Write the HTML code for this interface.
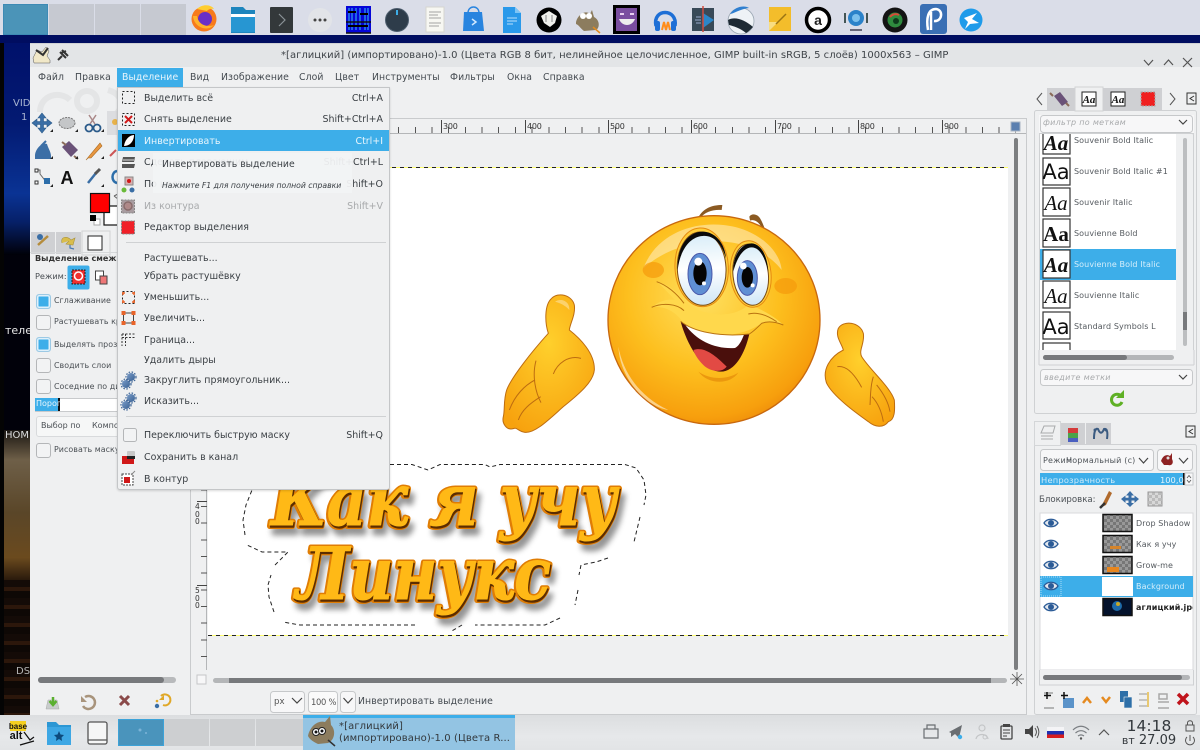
<!DOCTYPE html>
<html lang="ru"><head><meta charset="utf-8"><title>GIMP</title>
<style>
html,body{margin:0;padding:0;background:#000}
body{width:1200px;height:750px;overflow:hidden;position:relative;font-family:"DejaVu Sans","Liberation Sans","Noto Sans CJK SC",sans-serif;font-size:9.5px;color:#3c4146;filter:blur(.3px)}
div{position:absolute;box-sizing:border-box}
.t{white-space:nowrap;line-height:12px;height:12px}
.m{font-size:9.45px;color:#3a3f44;left:144px}
.s{font-size:9.45px;color:#3a3f44;right:817px;text-align:right}
.sv{position:absolute;left:0;top:0}
.cb{left:36px;width:15px;height:15px;border:1px solid #b4b6b8;border-radius:3px;background:#f2f3f4}
.on{background:#3daee9;box-shadow:inset 0 0 0 1.5px #dff0fa;border-color:#9cc9e4}
.lb{left:54px;font-size:7.9px;color:#4a4f54;letter-spacing:.05px}
.mb{top:72px;font-size:9.3px;color:#444a50;letter-spacing:.1px}
.fn{left:1074px;font-size:8px;color:#555a5f;letter-spacing:.1px}
.ln{left:1136px;font-size:8px;color:#555a5f;letter-spacing:.1px}
.btn{background:#f7f7f8;border:1px solid #c6c8ca;border-radius:3px}
.rl{top:121px;font-size:8px;color:#333;letter-spacing:-.2px}
</style></head><body>

<!-- wallpaper -->
<div style="left:0;top:35px;width:4px;height:680px;background:#040404"></div>
<div style="left:4px;top:35px;width:26px;height:220px;background:linear-gradient(#00106a 0%,#031a72 40%,#0a3394 72%,#062068 85%,#000008 100%)"></div>
<div style="left:4px;top:255px;width:26px;height:175px;background:#01010a"></div>
<div style="left:4px;top:430px;width:26px;height:150px;background:linear-gradient(#1a1612 0%,#6e5f48 20%,#5a4628 55%,#6b4a1e 85%,#2a1a0c 100%)"></div>
<div style="left:4px;top:580px;width:26px;height:135px;background:repeating-linear-gradient(#140b07 0 7px,#2c170b 7px 11px,#0e0805 11px 18px)"></div>
<div class="t" style="left:13px;top:98px;font-size:10px;color:#a8b4d0">VID</div>
<div class="t" style="left:21px;top:112px;font-size:10px;color:#a8b4d0">1</div>
<div class="t" style="left:5px;top:325px;font-size:11px;color:#e8e8e8">теле</div>
<div class="t" style="left:5px;top:430px;font-size:10px;color:#ddd">НОМ</div>
<div class="t" style="left:16px;top:666px;font-size:10px;color:#b4b4b4">DS</div>

<!-- top panel -->
<div style="left:0;top:0;width:1200px;height:35px;background:#dadde8"></div>
<div style="left:0;top:35px;width:1200px;height:8px;background:#000d60"></div>
<div style="left:3px;top:4px;width:45px;height:31px;background:#4b94b8;border:1px solid #3d8ab5"></div>
<div style="left:49px;top:4px;width:45px;height:31px;background:#c6c9d1"></div>
<div style="left:95px;top:4px;width:45px;height:31px;background:#c6c9d1"></div>
<div style="left:141px;top:4px;width:45px;height:31px;background:#c6c9d1"></div>

<!-- gimp window -->
<div style="left:30px;top:43px;width:1170px;height:672px;background:#eff0f1"></div>
<div style="left:30px;top:43px;width:1170px;height:24px;background:#e3e5e7;border-top:1px solid #cfd1d4"></div>
<div class="t" style="left:281px;top:50px;font-size:10px;color:#3f4449;letter-spacing:.02px">*[аглицкий] (импортировано)-1.0 (Цвета RGB 8 бит, нелинейное целочисленное, GIMP built-in sRGB, 5 слоёв) 1000x563 – GIMP</div>

<!-- menu bar -->
<div style="left:117px;top:68px;width:66px;height:19px;background:#3daee9"></div>
<div class="t mb" style="left:38px">Файл</div>
<div class="t mb" style="left:75px">Правка</div>
<div class="t mb" style="left:122px;color:#e8f5fc">Выделение</div>
<div class="t mb" style="left:190px">Вид</div>
<div class="t mb" style="left:221px">Изображение</div>
<div class="t mb" style="left:299px">Слой</div>
<div class="t mb" style="left:335px">Цвет</div>
<div class="t mb" style="left:372px">Инструменты</div>
<div class="t mb" style="left:450px">Фильтры</div>
<div class="t mb" style="left:507px">Окна</div>
<div class="t mb" style="left:543px">Справка</div>

<!-- canvas frame -->
<div style="left:190px;top:118px;width:837px;height:597px;background:#eff0f1;border:1px solid #c9cbcd"></div>
<div style="left:191px;top:119px;width:835px;height:15px;background:#eff0f1;border-bottom:1px solid #b4b6b8"></div>
<div style="left:191px;top:127px;width:825px;height:6px;background:repeating-linear-gradient(90deg,#555 0 1px,transparent 1px 16.68px);background-position:7px 0"></div>
<div style="left:441px;top:120px;width:1px;height:13px;background:#444"></div>
<div style="left:525px;top:120px;width:1px;height:13px;background:#444"></div>
<div style="left:608px;top:120px;width:1px;height:13px;background:#444"></div>
<div style="left:691px;top:120px;width:1px;height:13px;background:#444"></div>
<div style="left:775px;top:120px;width:1px;height:13px;background:#444"></div>
<div style="left:858px;top:120px;width:1px;height:13px;background:#444"></div>
<div style="left:942px;top:120px;width:1px;height:13px;background:#444"></div>
<div class="t rl" style="left:443px">300</div>
<div class="t rl" style="left:527px">400</div>
<div class="t rl" style="left:610px">500</div>
<div class="t rl" style="left:693px">600</div>
<div class="t rl" style="left:777px">700</div>
<div class="t rl" style="left:860px">800</div>
<div class="t rl" style="left:944px">900</div>
<!-- left ruler -->
<div style="left:191px;top:134px;width:16px;height:536px;background:#eff0f1;border-right:1px solid #b4b6b8"></div>
<div style="left:201px;top:134px;width:6px;height:536px;background:repeating-linear-gradient(180deg,#555 0 1px,transparent 1px 16.68px);background-position:0 5px"></div>
<div style="left:197px;top:501px;width:10px;height:1px;background:#444"></div>
<div style="left:197px;top:585px;width:10px;height:1px;background:#444"></div>
<div class="t" style="left:195px;top:503px;font-size:7.5px;line-height:7.5px;height:auto;white-space:normal;width:6px;color:#333">4<br>0<br>0</div>
<div class="t" style="left:195px;top:587px;font-size:7.5px;line-height:7.5px;height:auto;white-space:normal;width:6px;color:#333">5<br>0<br>0</div>
<!-- canvas -->
<div style="left:208px;top:167px;width:800px;height:468px;background:#fff"></div>

<svg class="sv" width="1200" height="750" viewBox="0 0 1200 750" xmlns="http://www.w3.org/2000/svg">
<defs>
<radialGradient id="fc" cx="45%" cy="38%" r="65%"><stop offset="0" stop-color="#ffe060"/><stop offset=".55" stop-color="#fdbf1e"/><stop offset=".9" stop-color="#f79f0d"/><stop offset="1" stop-color="#ee8d0a"/></radialGradient>
<radialGradient id="hd" cx="50%" cy="35%" r="70%"><stop offset="0" stop-color="#ffd02c"/><stop offset="1" stop-color="#f7a20e"/></radialGradient>
<linearGradient id="eyeg" x1="0" y1="0" x2="0" y2="1"><stop offset="0" stop-color="#d6ecf8"/><stop offset=".5" stop-color="#fff"/><stop offset="1" stop-color="#cfe6f6"/></linearGradient>
<filter id="bl" x="-10%" y="-20%" width="120%" height="140%"><feGaussianBlur stdDeviation="3"/></filter>
<pattern id="chk" width="6" height="6" patternUnits="userSpaceOnUse"><rect width="6" height="6" fill="#777"/><rect width="3" height="3" fill="#999"/><rect x="3" y="3" width="3" height="3" fill="#999"/></pattern>
<pattern id="chkl" width="6" height="6" patternUnits="userSpaceOnUse"><rect width="6" height="6" fill="#d8d8d8"/><rect width="3" height="3" fill="#bbb"/><rect x="3" y="3" width="3" height="3" fill="#bbb"/></pattern>
</defs>

<!-- selection edges on canvas -->
<g fill="none">
<path d="M208 167.500H1008M208 635.500H1008" stroke="#ffff70" stroke-width="1"/>
<path d="M208 167.500H1008M208 635.500H1008" stroke="#222" stroke-width="1" stroke-dasharray="4 4"/>
<path d="M390 464.500H412L428 470L440 464.500H485L490 467L500 464.500H625L636 468L644 480L646 495L644 505M640 517L634 542M608 558L596 562L581 565L579 575M578 590L575 605M560 618L545 625H475M462 625L450 632M415 625H300L283 622M274 612L269 597L268 585L271 575M275 565L285 555L288 552H262L247 545M245 535L243 520L246 505L252 490" stroke="#222" stroke-width="1" stroke-dasharray="4 3"/>
</g>

<!-- emoji -->
<g transform="translate(480 190) scale(.33333)">
 <path d="M655 82C670 55 695 45 727 45L725 60C700 58 675 65 660 85Z" fill="#8b5a22"/>
 <path d="M808 80C815 68 835 72 842 88C848 98 852 112 858 124L848 118C840 100 825 85 810 92Z" fill="#8b5a22"/>
 <ellipse cx="702" cy="390" rx="318" ry="313" fill="url(#fc)" stroke="#c8680e" stroke-width="4"/>
 <path d="M490 235C530 130 640 95 730 105C830 115 900 180 905 240C850 170 760 150 690 155C610 160 540 190 490 235Z" fill="#fff" opacity=".4"/>
 <path d="M415 470C430 550 480 620 565 660C500 650 420 570 415 470Z" fill="#fff" opacity=".5"/>
 <ellipse cx="520" cy="240" rx="32" ry="24" fill="#f59a0c" opacity=".7"/>
 <ellipse cx="917" cy="288" rx="34" ry="24" fill="#f59a0c" opacity=".7"/>
 <!-- lip area -->
 <path d="M530 275C570 285 600 310 625 345C680 380 760 385 805 345C830 350 880 375 910 405C885 395 860 392 845 400C800 430 750 436 715 436C670 434 630 420 605 392C590 370 555 345 515 352C535 335 560 325 585 330C565 310 548 290 530 275Z" fill="#ffd84c"/>
 <!-- mouth -->
 <path d="M602 395C650 430 740 440 808 432C795 490 765 545 722 545C665 545 620 460 602 395Z" fill="#4a0f0c"/>
 <path d="M614 402C660 430 730 436 792 434C784 455 775 470 765 474C710 478 650 455 614 402Z" fill="#fff"/>
 <path d="M640 480C670 470 700 490 740 530C725 550 690 545 670 525C655 510 645 495 640 480Z" fill="#e24a44"/>
 <path d="M602 394C640 425 720 442 808 432C820 425 835 410 845 400C865 392 885 395 910 405M805 372C830 365 860 375 890 395M530 275C560 285 590 310 612 340M515 352C545 338 590 340 612 362" fill="none" stroke="#b9720f" stroke-width="3"/>
 <path d="M655 545C690 570 740 570 775 548C750 585 685 585 655 545Z" fill="#eb980e"/>
 <!-- eye sockets -->
 <ellipse cx="665" cy="232" rx="80" ry="118" transform="rotate(-3 665 232)" fill="#ffce3a" stroke="#e68a10" stroke-width="3"/>
 <ellipse cx="812" cy="252" rx="61" ry="100" transform="rotate(-6 812 252)" fill="#ffce3a" stroke="#e68a10" stroke-width="3"/>
 <ellipse cx="665" cy="236" rx="73" ry="110" transform="rotate(-3 665 236)" fill="url(#eyeg)" stroke="#7a4a14" stroke-width="3"/>
 <path d="M593 240C590 170 625 125 668 125C705 125 735 160 738 205C725 160 700 135 668 138C630 140 600 180 593 240Z" fill="#0a0a0a"/>
 <ellipse cx="812" cy="254" rx="53" ry="92" transform="rotate(-6 812 254)" fill="url(#eyeg)" stroke="#7a4a14" stroke-width="3"/>
 <path d="M760 245C758 195 785 160 815 160C845 162 862 200 865 245C855 200 838 172 815 172C790 172 770 205 760 245Z" fill="#0a0a0a"/>
 <ellipse cx="660" cy="252" rx="36" ry="62" fill="#5f8fd3" stroke="#4a58aa" stroke-width="3"/>
 <ellipse cx="660" cy="250" rx="20" ry="36" fill="#050505"/>
 <circle cx="655" cy="215" r="12" fill="#fff"/><circle cx="672" cy="280" r="6" fill="#fff"/>
 <ellipse cx="802" cy="264" rx="30" ry="52" fill="#5f8fd3" stroke="#4a58aa" stroke-width="3"/>
 <ellipse cx="802" cy="262" rx="17" ry="31" fill="#050505"/>
 <circle cx="790" cy="228" r="10" fill="#fff"/><circle cx="818" cy="286" r="6" fill="#fff"/>
 <!-- left hand -->
 <path d="M205 430C195 400 192 345 215 325C235 305 275 315 283 345C287 375 270 400 268 420C300 445 345 490 343 540C340 575 300 610 250 650C205 690 165 730 135 727C115 725 110 710 100 716C80 722 65 700 70 680C75 660 70 630 80 600C95 560 160 480 205 430Z" fill="url(#hd)" stroke="#bd6c10" stroke-width="3"/>
 <path d="M168 512C155 560 168 610 183 638M165 570C135 585 105 615 88 660M182 620C150 640 125 660 115 690M220 552C232 520 265 495 303 505" fill="none" stroke="#bd6c10" stroke-width="3"/>
 <path d="M225 335C245 322 270 335 268 360C255 345 240 340 225 335Z" fill="#fff" opacity=".35"/>
 <!-- right hand -->
 <path d="M1090 480C1085 460 1065 440 1075 415C1090 390 1140 395 1150 430C1155 460 1135 480 1145 500C1170 540 1230 590 1243 630C1245 660 1245 690 1225 695C1210 715 1185 712 1165 695C1130 670 1060 620 1040 580C1025 540 1050 500 1090 480Z" fill="url(#hd)" stroke="#bd6c10" stroke-width="3"/>
 <path d="M1180 560C1170 590 1172 620 1170 645M1190 585C1210 610 1225 635 1230 665M1176 620C1195 640 1205 665 1210 695M1145 592C1125 555 1100 525 1072 530" fill="none" stroke="#bd6c10" stroke-width="3"/>
</g>

<!-- canvas text -->
<g font-family="'DejaVu Serif','Liberation Serif',serif" font-weight="bold" font-style="italic" font-size="72" stroke-linejoin="round">
 <g filter="url(#bl)" fill="#666" stroke="#666" stroke-width="5" opacity=".7">
  <text x="275" y="533" textLength="346" lengthAdjust="spacingAndGlyphs">Как я учу</text>
  <text x="300" y="607" textLength="255" lengthAdjust="spacingAndGlyphs">Линукс</text>
 </g>
 <g fill="#e07d04" stroke="#e07d04" stroke-width="6">
  <text x="271" y="526" textLength="346" lengthAdjust="spacingAndGlyphs">Как я учу</text>
  <text x="296" y="600" textLength="255" lengthAdjust="spacingAndGlyphs">Линукс</text>
 </g>
 <g fill="#5c2d00" stroke="#5c2d00" stroke-width="1.500">
  <text x="272" y="527" textLength="346" lengthAdjust="spacingAndGlyphs">Как я учу</text>
  <text x="297" y="601" textLength="255" lengthAdjust="spacingAndGlyphs">Линукс</text>
 </g>
 <g fill="#ffb916" stroke="#ffb916" stroke-width="1">
  <text x="271" y="525" textLength="346" lengthAdjust="spacingAndGlyphs">Как я учу</text>
  <text x="296" y="599" textLength="255" lengthAdjust="spacingAndGlyphs">Линукс</text>
 </g>
</g>

<!-- canvas scrollbars, corners -->
<rect x="1011" y="122" width="9" height="9" fill="#5a7fb0" stroke="#a8b4c4"/>
<rect x="1014" y="138" width="4" height="532" rx="2" fill="#7c7e80"/>
<rect x="213" y="678" width="794" height="5" rx="2.500" fill="#b4b6b8"/>
<rect x="229" y="678" width="762" height="5" fill="#77797c"/>
<rect x="197" y="675" width="9" height="9" fill="#f7f7f8" stroke="#c4c6c8"/>
<path d="M1017 672V686M1010 679H1024M1012 674L1022 684M1022 674L1012 684" stroke="#555" stroke-width=".8"/>

<!-- title bar icons -->
<path d="M33 58L37 50L42 52L46 47L49 51L47 56L50 60V63H34Z" fill="#f1e8c8" stroke="#555" stroke-width=".5"/><path d="M36 50L43 55L48 48" fill="none" stroke="#333" stroke-width="2"/>
<path d="M58 60L62 56M60 52L66 58M62 50L68 56M61 53L66 51" stroke="#333" stroke-width="2"/>
<path d="M1144 60L1148.500 65L1153 60M1164 65L1168.500 60L1173 65M1183 58L1192 67M1192 58L1183 67" fill="none" stroke="#555" stroke-width="1.200"/>

<!-- wilber bg -->
<g fill="none" stroke="#e4e5e6" stroke-width="6"><path d="M40 112C40 95 60 90 70 100"/><circle cx="87" cy="101" r="10"/><path d="M108 90C125 95 125 110 112 116"/></g>

<!-- top panel icons -->
<circle cx="204" cy="19" r="12.500" fill="#f77a1c"/><path d="M197 9C203 3 212 5 214 9C209 8 207 11 207 11Z" fill="#ffcd30"/><circle cx="205" cy="19" r="7" fill="#6a2fc6"/><path d="M193 16C194 28 208 32 214 25C206 28 198 24 197 16Z" fill="#ffb22a"/>
<path d="M231 7H243L246 10H255V33H231Z" fill="#1e85bd"/><rect x="231" y="14" width="24" height="3" fill="#fff"/><rect x="231" y="17" width="24" height="15" fill="#2796d2"/>
<rect x="270" y="7" width="23" height="26" rx="1" fill="#33383a"/><path d="M279 14L285 20L279 26" fill="none" stroke="#8a9296" stroke-width="1.200"/>
<circle cx="320" cy="20" r="12" fill="#e2e4e8"/><circle cx="315" cy="20" r="1.500" fill="#444"/><circle cx="320" cy="20" r="1.500" fill="#444"/><circle cx="325" cy="20" r="1.500" fill="#444"/>
<rect x="346" y="6" width="25" height="27" fill="#0606d8"/><path d="M349 8v22M352 8v22M356 8v22M360 8v22M365 8v22M368 8v22" stroke="#38c4ee" stroke-width="1"/><path d="M346 22H371M346 33H371" stroke="#111" stroke-width="1.500"/><path d="M348 12h8M360 14h8M348 26h20" stroke="#000" stroke-width="2"/>
<circle cx="397" cy="20" r="11.500" fill="#2e3c4a" stroke="#4c5c6c"/><path d="M397 10V15" stroke="#3daee9" stroke-width="2"/>
<rect x="426" y="7" width="18" height="25" fill="#f7f7f2" stroke="#d5d5d0"/><path d="M429 12h12M429 15h9M429 18h12M429 23h12M429 26h10" stroke="#888" stroke-width=".8"/>
<path d="M464 12H482L484 31H463Z" fill="#2884df"/><path d="M468 13C468 5 479 5 479 13" fill="none" stroke="#2884df" stroke-width="1.500"/><path d="M472 19L476 22L472 25" fill="none" stroke="#cfe8ff" stroke-width="1.500"/>
<path d="M503 7H515L521 13V33H503Z" fill="#2a99ea"/><path d="M515 7V13H521Z" fill="#7fc5f5"/><path d="M507 18H517M507 21H517M507 24H513" stroke="#b9e0fa" stroke-width=".9"/>
<circle cx="549" cy="20" r="12.500" fill="#000"/><path d="M541 16L549 11L557 16L555 23L550 27L544 23Z" fill="#f0f0ec"/><path d="M546 15v7M552 15v7" stroke="#888"/>
<path d="M576 22C578 14 586 10 590 14L592 10L594 17C600 20 600 28 596 30L584 31C580 28 579 25 576 24Z" fill="#8c7c5e"/><circle cx="583" cy="16" r="3" fill="#fff"/><circle cx="589" cy="16" r="3" fill="#fff"/><path d="M593 27L600 33" stroke="#e08a20" stroke-width="1.500"/>
<rect x="613" y="5" width="27" height="29" fill="#000"/><rect x="616" y="8" width="21" height="23" fill="#7a4ea0"/><path d="M619 19C622 27 632 27 635 19Z" fill="#eee"/><path d="M620 14h4M630 14h4" stroke="#e8d0f0" stroke-width="2"/>
<path d="M656 26C652 8 678 8 675 26" fill="none" stroke="#1e6fd6" stroke-width="3.500"/><rect x="655" y="21" width="5" height="10" rx="2" fill="#1e6fd6"/><rect x="671" y="21" width="5" height="10" rx="2" fill="#1e6fd6"/><path d="M662 30L664 22L666 30L668 22L670 30" fill="none" stroke="#ff8c1a" stroke-width="2"/>
<rect x="692" y="8" width="22" height="23" fill="#394a58"/><path d="M703 13L714 20L703 28Z" fill="#2b86c9"/><path d="M703 6V32" stroke="#d24a3c" stroke-width="1.500"/><path d="M696 17h5M695 20h6M696 23h5" stroke="#9ac" stroke-width="1"/>
<circle cx="741" cy="21" r="13" fill="#eef2f6" stroke="#9aa6b2" stroke-width=".8"/><path d="M730 14C735 6 745 5 749 8C740 9 733 14 730 14Z" fill="#2f7fd0"/><path d="M728 20C735 16 745 20 753 27C750 30 748 32 746 33C740 28 733 26 729 25Z" fill="#1e2a34"/>
<rect x="769" y="7" width="22" height="24" fill="#f3bd2b"/><path d="M769 31L778 22H769Z" fill="#f8dd82"/><path d="M776 24L786 14" stroke="#9a7414" stroke-width="1.500"/>
<circle cx="818" cy="20" r="11.500" fill="#fff" stroke="#000" stroke-width="3.500"/><text x="818" y="25" font-family="Liberation Sans,sans-serif" font-size="14" font-weight="bold" text-anchor="middle" fill="#222">a</text>
<circle cx="856" cy="18" r="8" fill="#2b82c9"/><circle cx="856" cy="18" r="4" fill="#7cc0ec"/><path d="M845 13v10M867 13v10" stroke="#455" stroke-width="2"/><path d="M850 30h12" stroke="#667" stroke-width="2"/>
<circle cx="895" cy="20" r="12.500" fill="#141414"/><circle cx="895" cy="20" r="7.500" fill="#2f8a3e"/><path d="M890 17a7 7 0 0 1 9 -2" stroke="#d84a38" stroke-width="2" fill="none"/><circle cx="896" cy="21" r="3" fill="#0e3a1c"/>
<rect x="920" y="4" width="27" height="30" rx="3" fill="#3a6fb4"/><path d="M928 30C926 18 928 9 936 9C944 10 942 22 934 21M931 12V30" fill="none" stroke="#fff" stroke-width="2.500"/>
<circle cx="971" cy="20" r="11.500" fill="#1f9bea"/><path d="M964 18L977 13L972 19L979 23L970 24L965 29L968 22Z" fill="#fff"/>

<!-- tools -->
<g>
 <path d="M42 113L46 118H43.500V121.500H47V119L52 123L47 127V124.500H43.500V128H46L42 133L38 128H40.500V124.500H37V127L32 123L37 119V121.500H40.500V118H38Z" fill="#3a6ea5" stroke="#2a5a8a" stroke-width=".6"/>
 <ellipse cx="67" cy="123" rx="8" ry="5.500" fill="#c4c6c8" stroke="#777" stroke-dasharray="2 1"/>
 <path d="M96 115L90 124M89 115L95 124" stroke="#a88" stroke-width="1.500"/><circle cx="89" cy="128" r="3.500" fill="none" stroke="#2a5a8a" stroke-width="1.800"/><circle cx="97" cy="128" r="3.500" fill="none" stroke="#2a5a8a" stroke-width="1.800"/>
 <path d="M35 156C35 149 42 142 47 144C48 148 51 152 51 156V159H35Z" fill="#3c6fa6"/><path d="M41 146L46 141" stroke="#3c6fa6" stroke-width="2"/>
 <path d="M62 147L69 141L78 150L71 157Z" fill="#6a5278"/><path d="M62 142L66 145M74 156L78 159" stroke="#8a6a58" stroke-width="2"/>
 <path d="M88 158L86 160L90 155L100 143L102 146L91 158Z" fill="#e89640" stroke="#a86a20" stroke-width=".6"/>
 <path d="M36 170H40V174L47 183" fill="none" stroke="#666" stroke-width="1"/><rect x="44" y="178" width="6" height="6" fill="#2c6eaa"/><rect x="35" y="169" width="3" height="3" fill="#fff" stroke="#333"/><rect x="35" y="181" width="3" height="3" fill="#fff" stroke="#333"/>
 <text x="67" y="184" font-family="'Liberation Sans',sans-serif" font-weight="bold" font-size="18" text-anchor="middle" fill="#111">A</text>
 <path d="M88 183L96 173" stroke="#3a6ea5" stroke-width="2.500"/><path d="M95 174L100 169" stroke="#555" stroke-width="3"/>
 <path d="M50 132h3v-3zM75 132h3v-3zM101 132h3v-3zM50 159h3v-3zM75 159h3v-3zM101 159h3v-3zM50 187h3v-3zM101 187h3v-3z" fill="#222"/>
 <rect x="107" y="111" width="11" height="24" fill="#dcdde0"/><circle cx="115" cy="122" r="3" fill="#e8b24a"/>
 <path d="M110 156L116 150" stroke="#c55" stroke-width="2"/>
 <path d="M117 171C111 172 111 182 117 183" fill="none" stroke="#2c6eaa" stroke-width="2.500"/>
</g>

<!-- colors -->
<rect x="104" y="206" width="18" height="19" fill="#fff" stroke="#111" stroke-width="1.200"/>
<rect x="90.500" y="193.500" width="19" height="19" fill="#f00" stroke="#111" stroke-width="1.200"/>
<rect x="94" y="219" width="6" height="6" fill="#fff" stroke="#aaa"/><rect x="90.500" y="215.500" width="5" height="5" fill="#000" stroke="#000"/>
<path d="M114 196L118 194M114 196L118 199" stroke="#666" fill="none"/>

<!-- toolbox tabs -->
<rect x="31" y="232" width="24" height="22" fill="#cfd0d3"/><rect x="56" y="232" width="25" height="22" fill="#cfd0d3"/><rect x="82" y="231" width="28" height="24" fill="#eff0f1" stroke="#d0d2d4"/>
<path d="M38 245L48 236" stroke="#b58c3c" stroke-width="2.500"/><circle cx="40" cy="237" r="3" fill="#3a6ea5"/>
<path d="M62 243C60 236 68 236 71 240L75 238L73 245L66 244L69 241" fill="#d9bd4c" stroke="#a8923c" stroke-width=".6"/><path d="M70 245v3l4 1" stroke="#4a7ab0" fill="none" stroke-width="1.200"/>
<rect x="88" y="236" width="14" height="14" fill="#fff" stroke="#222"/>

<!-- tool options icons -->
<rect x="67.500" y="265.500" width="22" height="24" rx="2" fill="#3daee9"/><rect x="72" y="270" width="13" height="14" fill="#f03030" stroke="#222" stroke-dasharray="2 1"/><circle cx="78.500" cy="276" r="4" fill="none" stroke="#fff" stroke-width="1.500"/>
<rect x="95.500" y="271" width="8" height="9" fill="#fff" stroke="#444"/><rect x="100" y="276" width="7" height="8" fill="#e77" stroke="#444"/>

<!-- toolbox hscroll -->
<rect x="38" y="677" width="138" height="6" rx="3" fill="#b8babc"/><rect x="38" y="677" width="126" height="6" rx="3" fill="#77797c"/>
<path d="M46 709L48 700H57L59 709Z" fill="#c8cccc" stroke="#aaa" stroke-width=".5"/><path d="M53 697V704M49.500 701L53 705L56.500 701" fill="none" stroke="#5bb030" stroke-width="2.500"/>
<path d="M85 697A6.500 6.500 0 1 1 83 706" fill="none" stroke="#a8947c" stroke-width="2.500"/><path d="M81 696V702H87Z" fill="#a8947c"/>
<path d="M120 696L129 705M129 696L120 705" stroke="#8a4a4a" stroke-width="3"/>
<path d="M161 696A5.500 5.500 0 1 1 163 705" fill="none" stroke="#e0a828" stroke-width="2"/><path d="M164 695V700H159Z" fill="#e0a828"/><circle cx="157" cy="706" r="2.200" fill="#3a6ea5"/><circle cx="157" cy="701" r="1.300" fill="#e0a828"/>

<!-- right panel frames -->
<rect x="1034.500" y="110.500" width="162" height="303" rx="2" fill="#eff0f1" stroke="#cfd1d3"/>
<rect x="1034.500" y="444.500" width="162" height="270" rx="2" fill="#eff0f1" stroke="#cfd1d3"/>
<path d="M1042 93L1037 99L1042 105M1170 93L1175 99L1170 105" fill="none" stroke="#555" stroke-width="1"/>
<rect x="1047" y="88" width="28" height="23" fill="#cfd0d3"/><path d="M1054 96L1060 92L1068 102L1062 106Z" fill="#6a5278"/><path d="M1050 93l3 3M1066 103l3 3" stroke="#8a6a58" stroke-width="2"/>
<rect x="1075" y="87" width="28" height="24" fill="#eff0f1" stroke="#d0d2d4"/>
<rect x="1103" y="88" width="29" height="23" fill="#cfd0d3"/><rect x="1132" y="88" width="30" height="23" fill="#cfd0d3"/>
<rect x="1082" y="92" width="14" height="14" fill="#fff" stroke="#222"/><rect x="1111" y="92" width="14" height="14" fill="#fff" stroke="#222"/>
<text x="1089" y="103" font-family="'Liberation Serif',serif" font-weight="bold" font-style="italic" font-size="11" text-anchor="middle" fill="#111">Aa</text>
<text x="1118" y="103" font-family="'Liberation Serif',serif" font-weight="bold" font-style="italic" font-size="11" text-anchor="middle" fill="#111">Aa</text>
<rect x="1141" y="92" width="14" height="14" fill="#f02020" stroke="#aaa" stroke-dasharray="2 1"/>
<path d="M1187 93h9v11h-9zM1194 96l-4 2.500 4 2.500" fill="none" stroke="#333"/>

<!-- layers tabs -->
<rect x="1061" y="423" width="24" height="22" fill="#cfd0d3"/><rect x="1086" y="423" width="25" height="22" fill="#cfd0d3"/>
<rect x="1034.500" y="421.500" width="26" height="24" fill="#eff0f1" stroke="#d4d6d8"/>
<path d="M1041 433l3 -7h11l-2 7zM1041 436h12M1041 439h12" fill="none" stroke="#a8aaac"/>
<rect x="1068" y="428" width="10" height="5" fill="#d43a3a"/><rect x="1068" y="433" width="10" height="5" fill="#4aa34a"/><rect x="1068" y="438" width="10" height="4" fill="#4a5fc0"/>
<path d="M1094 439C1094 430 1096 428 1098 429C1100 434 1102 434 1104 429C1107 428 1108 432 1107 439" fill="none" stroke="#3a5a80" stroke-width="2"/><circle cx="1095" cy="430" r="1.500" fill="#3a5a80"/><circle cx="1106" cy="430" r="1.500" fill="#3a5a80"/>
<path d="M1186 426h9v11h-9zM1193 429l-4 2.500 4 2.500" fill="none" stroke="#333"/>

<!-- lock icons -->
<path d="M1109 491L1103 503L1100 508L1106 505L1112 493Z" fill="#b06a2c"/><path d="M1100 508L1105 503" stroke="#333" stroke-width="2.500"/>
<path d="M1130 491L1134 495.500H1131.500V497.800H1134.500V495.500L1139 499L1134.500 503V500.500H1131.500V503H1134L1130 507L1126 503H1128.500V500.500H1125.500V503L1121 499L1125.500 495.500V497.800H1128.500V495.500H1126Z" fill="#3a6ea5"/>
<rect x="1148" y="492" width="14" height="14" fill="url(#chkl)" stroke="#999"/>

<!-- layer bottom -->
<path d="M1044 693h9M1044 708h10" stroke="#777"/><rect x="1046" y="696" width="9" height="8" fill="#eee"/><path d="M1047 692v7M1044 695.500h7" stroke="#111" stroke-width="1.500"/>
<rect x="1063" y="698" width="11" height="10" fill="#5b93c9"/><path d="M1064 692v7M1061 695.500h7" stroke="#111" stroke-width="1.500"/>
<path d="M1083 703L1087 698L1091 703M1102 697L1106 702L1110 697" fill="none" stroke="#e58a20" stroke-width="2.500"/>
<rect x="1120" y="691" width="8" height="11" fill="#2d6fa8"/><rect x="1124" y="697" width="8" height="11" fill="#2d6fa8" stroke="#eee" stroke-width=".6"/>
<path d="M1139 694h9M1139 700h9M1139 706h9" stroke="#c4c4c4" stroke-width="2"/><path d="M1148 692v15" stroke="#e8c870" stroke-width="2"/>
<path d="M1159 694h8v5h-8zM1158 702h11M1158 708h11" fill="none" stroke="#a8a8a8" stroke-width="1.500"/>
<path d="M1178 694L1188 704M1188 694L1178 704" stroke="#c0141c" stroke-width="3.500"/>
</svg>

<!-- right panel: fonts -->
<div style="left:1039px;top:133px;width:155px;height:232px;border:1px solid #cfd1d3;border-radius:2px"></div>
<div style="left:1040px;top:134px;width:136px;height:216px;background:#fff;overflow:hidden">
 <div style="left:0;top:115px;width:136px;height:31px;background:#3daee9"></div>
</div>
<div class="fn t" style="top:135px">Souvenir Bold Italic</div>
<div class="fn t" style="top:166px">Souvenir Bold Italic #1</div>
<div class="fn t" style="top:197px">Souvenir Italic</div>
<div class="fn t" style="top:228px">Souvienne Bold</div>
<div class="fn t" style="top:259px;color:#d5eefb">Souvienne Bold Italic</div>
<div class="fn t" style="top:290px">Souvienne Italic</div>
<div class="fn t" style="top:321px">Standard Symbols L</div>
<svg class="sv" width="1200" height="750" viewBox="0 0 1200 750" xmlns="http://www.w3.org/2000/svg">
<g fill="#fff" stroke="#333" stroke-width="1.200">
<rect x="1043" y="127" width="27" height="27"/><rect x="1043" y="158" width="27" height="27"/><rect x="1043" y="188" width="27" height="28"/><rect x="1043" y="219" width="27" height="28"/><rect x="1043" y="250" width="27" height="28"/><rect x="1043" y="281" width="27" height="27"/><rect x="1043" y="312" width="27" height="27"/><rect x="1043" y="343" width="27" height="14"/>
</g>
<g font-size="21" fill="#111" font-family="'DejaVu Sans',sans-serif" text-anchor="middle">
<text x="1056" y="150" font-family="'Liberation Serif',serif" font-weight="bold" font-style="italic">Aa</text>
<text x="1056" y="179">Aa</text>
<text x="1056" y="210" font-family="'Liberation Serif',serif" font-style="italic">Aa</text>
<text x="1056" y="241" font-family="'Liberation Serif',serif" font-weight="bold">Aa</text>
<text x="1056" y="272" font-family="'Liberation Serif',serif" font-weight="bold" font-style="italic">Aa</text>
<text x="1056" y="303" font-family="'Liberation Serif',serif" font-style="italic">Aa</text>
<text x="1056" y="334">Aa</text>
</g>
<rect x="1039" y="350" width="155" height="15" fill="#eff0f1"/>
<rect x="1039" y="115" width="155" height="18" fill="#f7f7f8"/>
<rect x="1040.500" y="115.500" width="152" height="17" rx="3" fill="none" stroke="#c6c8ca"/>
<path d="M1039 133.500H1194" stroke="#cfd1d3"/><path d="M1039 365V350" stroke="#cfd1d3"/><path d="M1194 365V350" stroke="#cfd1d3"/><path d="M1039 365H1194" stroke="#cfd1d3"/>
<path d="M1179 120L1183 124L1187 120" fill="none" stroke="#444" stroke-width="1.200"/>
<rect x="1183" y="138" width="4" height="208" rx="2" fill="#bcbec0"/><rect x="1183" y="312" width="4" height="18" fill="#77797c"/>
<rect x="1043" y="355" width="131" height="5" rx="2.500" fill="#b4b6b8"/><rect x="1043" y="355" width="84" height="5" rx="2.500" fill="#77797c"/>
<rect x="1040.500" y="369.500" width="152" height="16" rx="3" fill="#f7f7f8" stroke="#c6c8ca"/>
<path d="M1179 375L1183 379L1187 375" fill="none" stroke="#444" stroke-width="1.200"/>
<path d="M1121 396A5.500 5.500 0 1 0 1122 402" fill="none" stroke="#5fb025" stroke-width="3"/><path d="M1116 398H1124V390Z" fill="#5fb025"/>

<!-- layers combos -->
<rect x="1040.500" y="449.500" width="113" height="21" rx="3" fill="#f7f7f8" stroke="#c6c8ca"/>
<rect x="1157.500" y="449.500" width="35" height="21" rx="3" fill="#f7f7f8" stroke="#c6c8ca"/>
<path d="M1139 458L1143.500 463L1148 458M1179 458L1183.500 463L1188 458" fill="none" stroke="#444" stroke-width="1.200"/>
<path d="M1161 461C1163 455 1167 454 1170 456L1172 453L1172 459C1174 463 1172 466 1168 465L1164 465Z" fill="#8e2222"/><circle cx="1168" cy="458" r="1.500" fill="#ddd"/>
<!-- opacity -->
<rect x="1040" y="473" width="144" height="12" fill="#3daee9"/><rect x="1183" y="473" width="1.500" height="12" fill="#111"/>
<rect x="1185" y="473" width="8" height="12" fill="#f7f7f8" stroke="#c6c8ca"/><path d="M1187 478L1189 475.500L1191 478M1187 480L1189 482.500L1191 480" fill="none" stroke="#555" stroke-width=".8"/>
<!-- layers list -->
<rect x="1040" y="513" width="153" height="157" fill="#fff" stroke="#d8dadc"/>
<rect x="1040" y="670" width="153" height="15" fill="#eff0f1"/>
<path d="M1039.500 670V685H1193.500V670" fill="none" stroke="#cfd1d3"/>
<rect x="1043" y="675" width="147" height="5" rx="2.500" fill="#b4b6b8"/><rect x="1043" y="675" width="139" height="5" rx="2.500" fill="#77797c"/>
<rect x="1040" y="576" width="153" height="21" fill="#3daee9"/>
<rect x="1041" y="577" width="20" height="19" fill="none" stroke="#a8dcf6" stroke-dasharray="1 1"/>
<g>
<path d="M1044 523C1047 518 1055 518 1058 523C1055 528 1047 528 1044 523Z" fill="#e4e8ee" stroke="#2a5a96" stroke-width="1.300"/><circle cx="1051" cy="523" r="3" fill="#2a5a96"/>
<path d="M1044 544C1047 539 1055 539 1058 544C1055 549 1047 549 1044 544Z" fill="#e4e8ee" stroke="#2a5a96" stroke-width="1.300"/><circle cx="1051" cy="544" r="3" fill="#2a5a96"/>
<path d="M1044 565C1047 560 1055 560 1058 565C1055 570 1047 570 1044 565Z" fill="#e4e8ee" stroke="#2a5a96" stroke-width="1.300"/><circle cx="1051" cy="565" r="3" fill="#2a5a96"/>
<path d="M1044 586C1047 581 1055 581 1058 586C1055 591 1047 591 1044 586Z" fill="#e4e8ee" stroke="#2a5a96" stroke-width="1.300"/><circle cx="1051" cy="586" r="3" fill="#2a5a96"/>
<path d="M1044 607C1047 602 1055 602 1058 607C1055 612 1047 612 1044 607Z" fill="#e4e8ee" stroke="#2a5a96" stroke-width="1.300"/><circle cx="1051" cy="607" r="3" fill="#2a5a96"/>
</g>
<rect x="1103" y="514.500" width="29" height="17" fill="url(#chk)" stroke="#111" stroke-width="1.500"/>
<rect x="1103" y="535.500" width="29" height="17" fill="url(#chk)" stroke="#111" stroke-width="1.500"/><rect x="1110" y="546" width="11" height="3" fill="#d5842a"/>
<rect x="1103" y="556.500" width="29" height="17" fill="url(#chk)" stroke="#111" stroke-width="1.500"/><rect x="1107" y="567" width="12" height="5" fill="#e8861e"/>
<rect x="1102" y="577" width="31" height="19" fill="#fff"/>
<rect x="1103" y="598.500" width="29" height="17" fill="#04122c" stroke="#111" stroke-width="1.500"/><circle cx="1117" cy="606" r="5" fill="#1e6aa8"/><circle cx="1118" cy="604" r="2" fill="#c8a828"/>

<!-- status row -->
<rect x="270.500" y="691.500" width="34" height="21" rx="3" fill="#f7f7f8" stroke="#c6c8ca"/>
<path d="M292 698L297 703L302 698" fill="none" stroke="#444" stroke-width="1.200"/>
<rect x="308.500" y="691.500" width="29" height="21" rx="3" fill="#fafafa" stroke="#c6c8ca"/>
<rect x="340.500" y="691.500" width="15" height="21" rx="3" fill="#f7f7f8" stroke="#c6c8ca"/>
<path d="M343.500 698L348 703L352.500 698" fill="none" stroke="#444" stroke-width="1.200"/>
</svg>

<div class="t" style="left:1043px;top:117px;font-size:8px;font-style:italic;color:#a8aaac;letter-spacing:.3px">фильтр по меткам</div>
<div class="t" style="left:274px;top:696px;font-size:8.6px;color:#555">px</div>
<div class="t" style="left:311px;top:696px;font-size:8.4px;color:#555;letter-spacing:-.3px">100 %</div>
<div class="t" style="left:358px;top:696px;font-size:9.3px;color:#444a50;letter-spacing:.1px">Инвертировать выделение</div>

<!-- layer text -->
<div class="t" style="left:1043px;top:455px;font-size:8px;color:#50555a;letter-spacing:.2px">Режим</div>
<div class="t" style="left:1066px;top:455px;font-size:8px;color:#50555a;letter-spacing:.2px">Нормальный (с)</div>
<div class="t" style="left:1041px;top:474px;font-size:8.3px;color:#fff;opacity:.75;letter-spacing:.2px">Непрозрачность</div>
<div class="t" style="left:1160px;top:474px;font-size:8.3px;color:#fff;opacity:.85">100,0</div>
<div class="t" style="left:1039px;top:494px;font-size:8.6px;color:#4c5156">Блокировка:</div>
<div class="ln t" style="top:518px">Drop Shadow</div>
<div class="ln t" style="top:539px">Как я учу</div>
<div class="ln t" style="top:560px">Grow-me</div>
<div class="ln t" style="top:581px;color:#d5eefb">Background</div>
<div style="left:1136px;top:602px;width:57px;height:12px;overflow:hidden"><div class="t" style="left:0;top:0;font-size:8px;font-weight:bold;color:#222;letter-spacing:.1px">аглицкий.jpg</div></div>
<div class="t" style="left:1044px;top:372px;font-size:8px;font-style:italic;color:#a8aaac;letter-spacing:.3px">введите метки</div>

<!-- toolbox options text -->
<div style="left:30px;top:252px;width:155px;height:1px;background:#d6d8da"></div>
<div class="t" style="left:35px;top:252px;font-size:8.1px;font-weight:bold;color:#333">Выделение смежных</div>
<div class="t" style="left:35px;top:270px;font-size:8.2px;color:#4a4f54">Режим:</div>
<div class="cb on" style="top:294px"></div><div class="t lb" style="top:295px">Сглаживание</div>
<div class="cb" style="top:315px"></div><div class="t lb" style="top:316px">Растушевать края</div>
<div class="cb on" style="top:337px"></div><div class="t lb" style="top:339px">Выделять прозрачные</div>
<div class="cb" style="top:358px"></div><div class="t lb" style="top:360px">Сводить слои</div>
<div class="cb" style="top:379px"></div><div class="t lb" style="top:381px">Соседние по диагонали</div>
<div style="left:35px;top:398px;width:90px;height:14px;background:#fff;border:1px solid #c8cacc"></div>
<div style="left:35px;top:398px;width:23px;height:13px;background:#3daee9"></div>
<div style="left:58px;top:398px;width:1.500px;height:13px;background:#111"></div>
<div class="t" style="left:36px;top:398px;font-size:8px;color:#e8f5fc">Порог</div>
<div class="btn" style="left:36px;top:416px;width:90px;height:21px;background:#f6f7f7;border-color:#d8dadc"></div>
<div class="t" style="left:41px;top:420px;font-size:8px;color:#4a4f54">Выбор по</div>
<div class="t" style="left:92px;top:420px;font-size:8px;color:#4a4f54">Композит</div>
<div class="cb" style="top:443px"></div><div class="t lb" style="top:444px">Рисовать маску</div>

<!-- bottom panel -->
<div style="left:0;top:715px;width:1200px;height:35px;background:linear-gradient(#dcdee0,#e6e8ea 60%,#e2e4e6)"></div>
<div style="left:118px;top:719px;width:46px;height:27px;background:#4a94bc;border:1px solid #3da3d8"></div>
<div style="left:164px;top:719px;width:45px;height:27px;background:#cdcfd1"></div>
<div style="left:210px;top:719px;width:45px;height:27px;background:#cdcfd1"></div>
<div style="left:256px;top:719px;width:47px;height:27px;background:#cdcfd1"></div>
<div style="left:303px;top:715px;width:212px;height:35px;background:#93c4e3;border-top:3px solid #3daee9"></div>
<div class="t" style="left:339px;top:721px;font-size:10px;color:#33383c;letter-spacing:.1px">*[аглицкий]</div>
<div class="t" style="left:339px;top:733px;font-size:10px;color:#33383c;letter-spacing:.1px">(импортировано)-1.0 (Цвета R...</div>
<div class="t" style="left:1122px;top:716px;width:54px;height:20px;line-height:20px;font-size:15.5px;color:#33383c;text-align:center">14:18</div>
<div class="t" style="left:1120px;top:733px;width:58px;height:15px;line-height:15px;font-size:13px;color:#33383c;text-align:center;white-space:nowrap"><span style="font-size:11px">вт</span> 27.09</div>

<svg class="sv" width="1200" height="750" viewBox="0 0 1200 750" xmlns="http://www.w3.org/2000/svg">
<rect x="10" y="721" width="16" height="10" fill="#f5d020"/>
<text x="18" y="729" font-family="'Liberation Sans',sans-serif" font-weight="bold" font-size="8" text-anchor="middle" fill="#111">base</text>
<text x="16" y="739" font-family="'Liberation Sans',sans-serif" font-weight="bold" font-size="11" text-anchor="middle" fill="#111">alt</text>
<path d="M24 732L30 740L34 737M20 745L34 741" stroke="#111" stroke-width="1.200" fill="none"/>
<path d="M47 722H56L59 725H71V745H47Z" fill="#2c97d4"/><path d="M47 727H71V745H47Z" fill="#3da7e4"/><path d="M59 731L60.500 734.500L64 735L61.500 737.500L62 741L59 739L56 741L56.500 737.500L54 735L57.500 734.500Z" fill="#0d4a7c"/>
<rect x="88" y="722" width="19" height="22" rx="2" fill="#f5f6f6" stroke="#555" stroke-width="1.300"/><path d="M88 740H107" stroke="#555" stroke-width="1.300"/>
<circle cx="140" cy="730" r="1.500" fill="#7db4d8"/><circle cx="146" cy="733" r="1" fill="#7db4d8"/>
<!-- taskbar gimp -->
<path d="M308 736C310 726 318 720 325 722L330 716L331 725C336 730 335 740 328 743L318 744C314 742 310 740 308 736Z" fill="#8c7c5e"/><circle cx="316" cy="732" r="3.500" fill="#fff" stroke="#222"/><circle cx="322" cy="731" r="3.500" fill="#fff" stroke="#222"/><circle cx="316" cy="732" r="1.500" fill="#111"/><circle cx="322" cy="731" r="1.500" fill="#111"/><path d="M328 740L335 746" stroke="#333" stroke-width="1.500"/>
<!-- tray -->
<path d="M924 729H938V738H924ZM927 729V725H935V729" fill="none" stroke="#6a6e72" stroke-width="1.200"/>
<path d="M949 732L962 725L959 738L955 734L951 737V733Z" fill="#6a6e72"/><circle cx="960" cy="737" r="2.200" fill="#3daee9"/>
<circle cx="982" cy="728" r="3" fill="none" stroke="#c4c6c8" stroke-width="1.200"/><path d="M976 739C977 733 987 733 988 739" fill="none" stroke="#c4c6c8" stroke-width="1.200"/><circle cx="985" cy="737" r="2" fill="none" stroke="#c4c6c8"/>
<rect x="1001" y="726" width="11" height="13" rx="1" fill="none" stroke="#444" stroke-width="1.300"/><rect x="1003" y="724" width="7" height="3" fill="#444"/><path d="M1003 730h7M1003 733h7M1003 736h4" stroke="#444"/>
<path d="M1025 729H1029L1033 725V738L1029 734H1025Z" fill="#444"/><path d="M1035 728C1037 731 1037 733 1035 736M1037 726C1039.500 730 1039.500 734 1037 738" fill="none" stroke="#555"/>
<rect x="1047" y="727" width="17" height="4" fill="#f4f4f6"/><rect x="1047" y="731" width="17" height="3.500" fill="#2030b0"/><rect x="1047" y="734.500" width="17" height="3.500" fill="#d81e1e"/>
<path d="M1073 730C1078 725 1084 725 1089 730M1075.500 733C1079 730 1083 730 1086.500 733M1078 736C1080 734.500 1082 734.500 1084 736" fill="none" stroke="#7a7e82" stroke-width="1.200"/><circle cx="1081" cy="738.500" r="1.200" fill="#555"/>
<path d="M1099 735L1104 730L1109 735" fill="none" stroke="#555" stroke-width="1.200"/>
<rect x="1186" y="725" width="8" height="6" fill="none" stroke="#555"/><path d="M1187.500 725V723C1187.500 720 1192.500 720 1192.500 723V725" fill="none" stroke="#555"/>
<path d="M1187 737A4.500 4.500 0 1 0 1193 737M1190 735V741" fill="none" stroke="#555"/>
</svg>

<!-- menu popup -->
<div style="left:117px;top:87px;width:273px;height:403px;background:#eff0f1;border:1px solid #c4c6c8;border-radius:0 0 3px 3px;box-shadow:0 1px 2px rgba(0,0,0,.15)"></div>
<div style="left:118px;top:130px;width:271px;height:21px;background:#3daee9"></div>
<div style="left:126px;top:242px;width:260px;height:1px;background:#cfd1d3"></div>
<div style="left:126px;top:416px;width:260px;height:1px;background:#cfd1d3"></div>

<div class="t m" style="top:93px">Выделить всё</div><div class="t s" style="top:93px">Ctrl+A</div>
<div class="t m" style="top:114px">Снять выделение</div><div class="t s" style="top:114px">Shift+Ctrl+A</div>
<div class="t m" style="top:136px;color:#e8f5fc">Инвертировать</div><div class="t s" style="top:136px;color:#e8f5fc">Ctrl+I</div>
<div class="t m" style="top:157px">Сделать плавающим</div><div class="t s" style="top:157px">Shift+Ctrl+L</div>
<div class="t m" style="top:179px">По цвету</div><div class="t s" style="top:179px">Shift+O</div>
<div class="t m" style="top:201px;color:#a8aaac">Из контура</div><div class="t s" style="top:201px;color:#a8aaac">Shift+V</div>
<div class="t m" style="top:222px">Редактор выделения</div>
<div class="t m" style="top:253px">Растушевать...</div>
<div class="t m" style="top:271px">Убрать растушёвку</div>
<div class="t m" style="top:292px">Уменьшить...</div>
<div class="t m" style="top:313px">Увеличить...</div>
<div class="t m" style="top:335px">Граница...</div>
<div class="t m" style="top:355px">Удалить дыры</div>
<div class="t m" style="top:375px">Закруглить прямоугольник...</div>
<div class="t m" style="top:396px">Исказить...</div>
<div class="t m" style="top:430px">Переключить быструю маску</div><div class="t s" style="top:430px">Shift+Q</div>
<div class="t m" style="top:452px">Сохранить в канал</div>
<div class="t m" style="top:474px">В контур</div>

<!-- tooltip -->
<div style="left:153px;top:153px;width:199px;height:40px;background:rgba(242,243,244,.94)"></div>
<div class="t" style="left:162px;top:159px;font-size:9.3px;color:#3a3f44">Инвертировать выделение</div>
<div class="t" style="left:162px;top:180px;font-size:7.7px;font-style:italic;color:#3a3f44">Нажмите F1 для получения полной справки</div>

<svg class="sv" width="1200" height="750" viewBox="0 0 1200 750" xmlns="http://www.w3.org/2000/svg">
<defs><linearGradient id="gr" x1="0" y1="0" x2="1" y2="1"><stop offset="0" stop-color="#7a9cc8"/><stop offset="1" stop-color="#3a6294"/></linearGradient></defs>
<rect x="122.500" y="91.500" width="12" height="12" fill="none" stroke="#222" stroke-dasharray="2 2"/>
<rect x="122.500" y="113.500" width="12" height="12" fill="none" stroke="#222" stroke-dasharray="2 2"/><path d="M125 116L132 123M132 116L125 123" stroke="#d01818" stroke-width="2"/>
<rect x="122" y="134" width="13" height="13" fill="#000"/><path d="M124 146C125 139 130 135 134 135C134 141 130 146 124 146Z" fill="#fff"/>
<path d="M123 157H135L134 162H122ZM122 164H135L134 168H122Z" fill="#555"/><path d="M123 160H134" stroke="#ddd"/>
<rect x="125" y="177" width="8" height="8" fill="#d8b0b0" stroke="#888"/><circle cx="129" cy="181" r="2" fill="#d01818"/><circle cx="124" cy="190" r="2.500" fill="#6aba3a"/><circle cx="132" cy="190" r="2.500" fill="#3a6ea5"/>
<rect x="121.500" y="200" width="13" height="13" fill="#a89ca0" stroke="#888" stroke-dasharray="2 1"/><circle cx="128" cy="206" r="4" fill="none" stroke="#8a6a6a" stroke-width="1.500"/><circle cx="128" cy="206" r="3" fill="#b08888"/>
<rect x="121.500" y="221" width="13" height="13" fill="#f02028" stroke="#888" stroke-dasharray="2 1"/>
<rect x="122.500" y="291.500" width="12" height="12" fill="none" stroke="#222" stroke-dasharray="2 2"/><path d="M122 293h3M132 293h3M122 302h3M132 302h3M123 292v3M134 292v3M123 300v3M134 300v3" stroke="#e8642a" stroke-width="1.500"/>
<rect x="123.500" y="313" width="10" height="10" fill="none" stroke="#444"/><g fill="#e8642a"><rect x="121.500" y="311" width="4" height="4"/><rect x="131.500" y="311" width="4" height="4"/><rect x="121.500" y="321" width="4" height="4"/><rect x="131.500" y="321" width="4" height="4"/></g>
<path d="M122 334V346M125.500 334V346M122 334H135M122 337.500H135" fill="none" stroke="#333" stroke-dasharray="2 1.500"/>
<g fill="url(#gr)"><circle cx="131" cy="377" r="4"/><circle cx="126" cy="384" r="4"/><circle cx="131" cy="398" r="4"/><circle cx="126" cy="405" r="4"/></g>
<g fill="none" stroke="#3a6294" stroke-dasharray="1.500 1.500" stroke-width="1.200"><circle cx="131" cy="377" r="5"/><circle cx="126" cy="384" r="5"/><circle cx="131" cy="398" r="5"/><circle cx="126" cy="405" r="5"/></g>
<rect x="123.500" y="428.500" width="13" height="13" rx="2" fill="#f2f3f4" stroke="#b4b6b8"/>
<rect x="127" y="451" width="8" height="8" rx="1" fill="#c8c8c8"/><rect x="122" y="456" width="12" height="8" fill="#d01818"/><rect x="127" y="456" width="8" height="3" fill="#222"/>
<rect x="122" y="474" width="11" height="11" fill="#fff" stroke="#444" stroke-dasharray="2 1"/><rect x="124" y="477" width="6" height="6" fill="#d01818"/><path d="M131 475L135 471" stroke="#888"/>
</svg>

</body></html>
